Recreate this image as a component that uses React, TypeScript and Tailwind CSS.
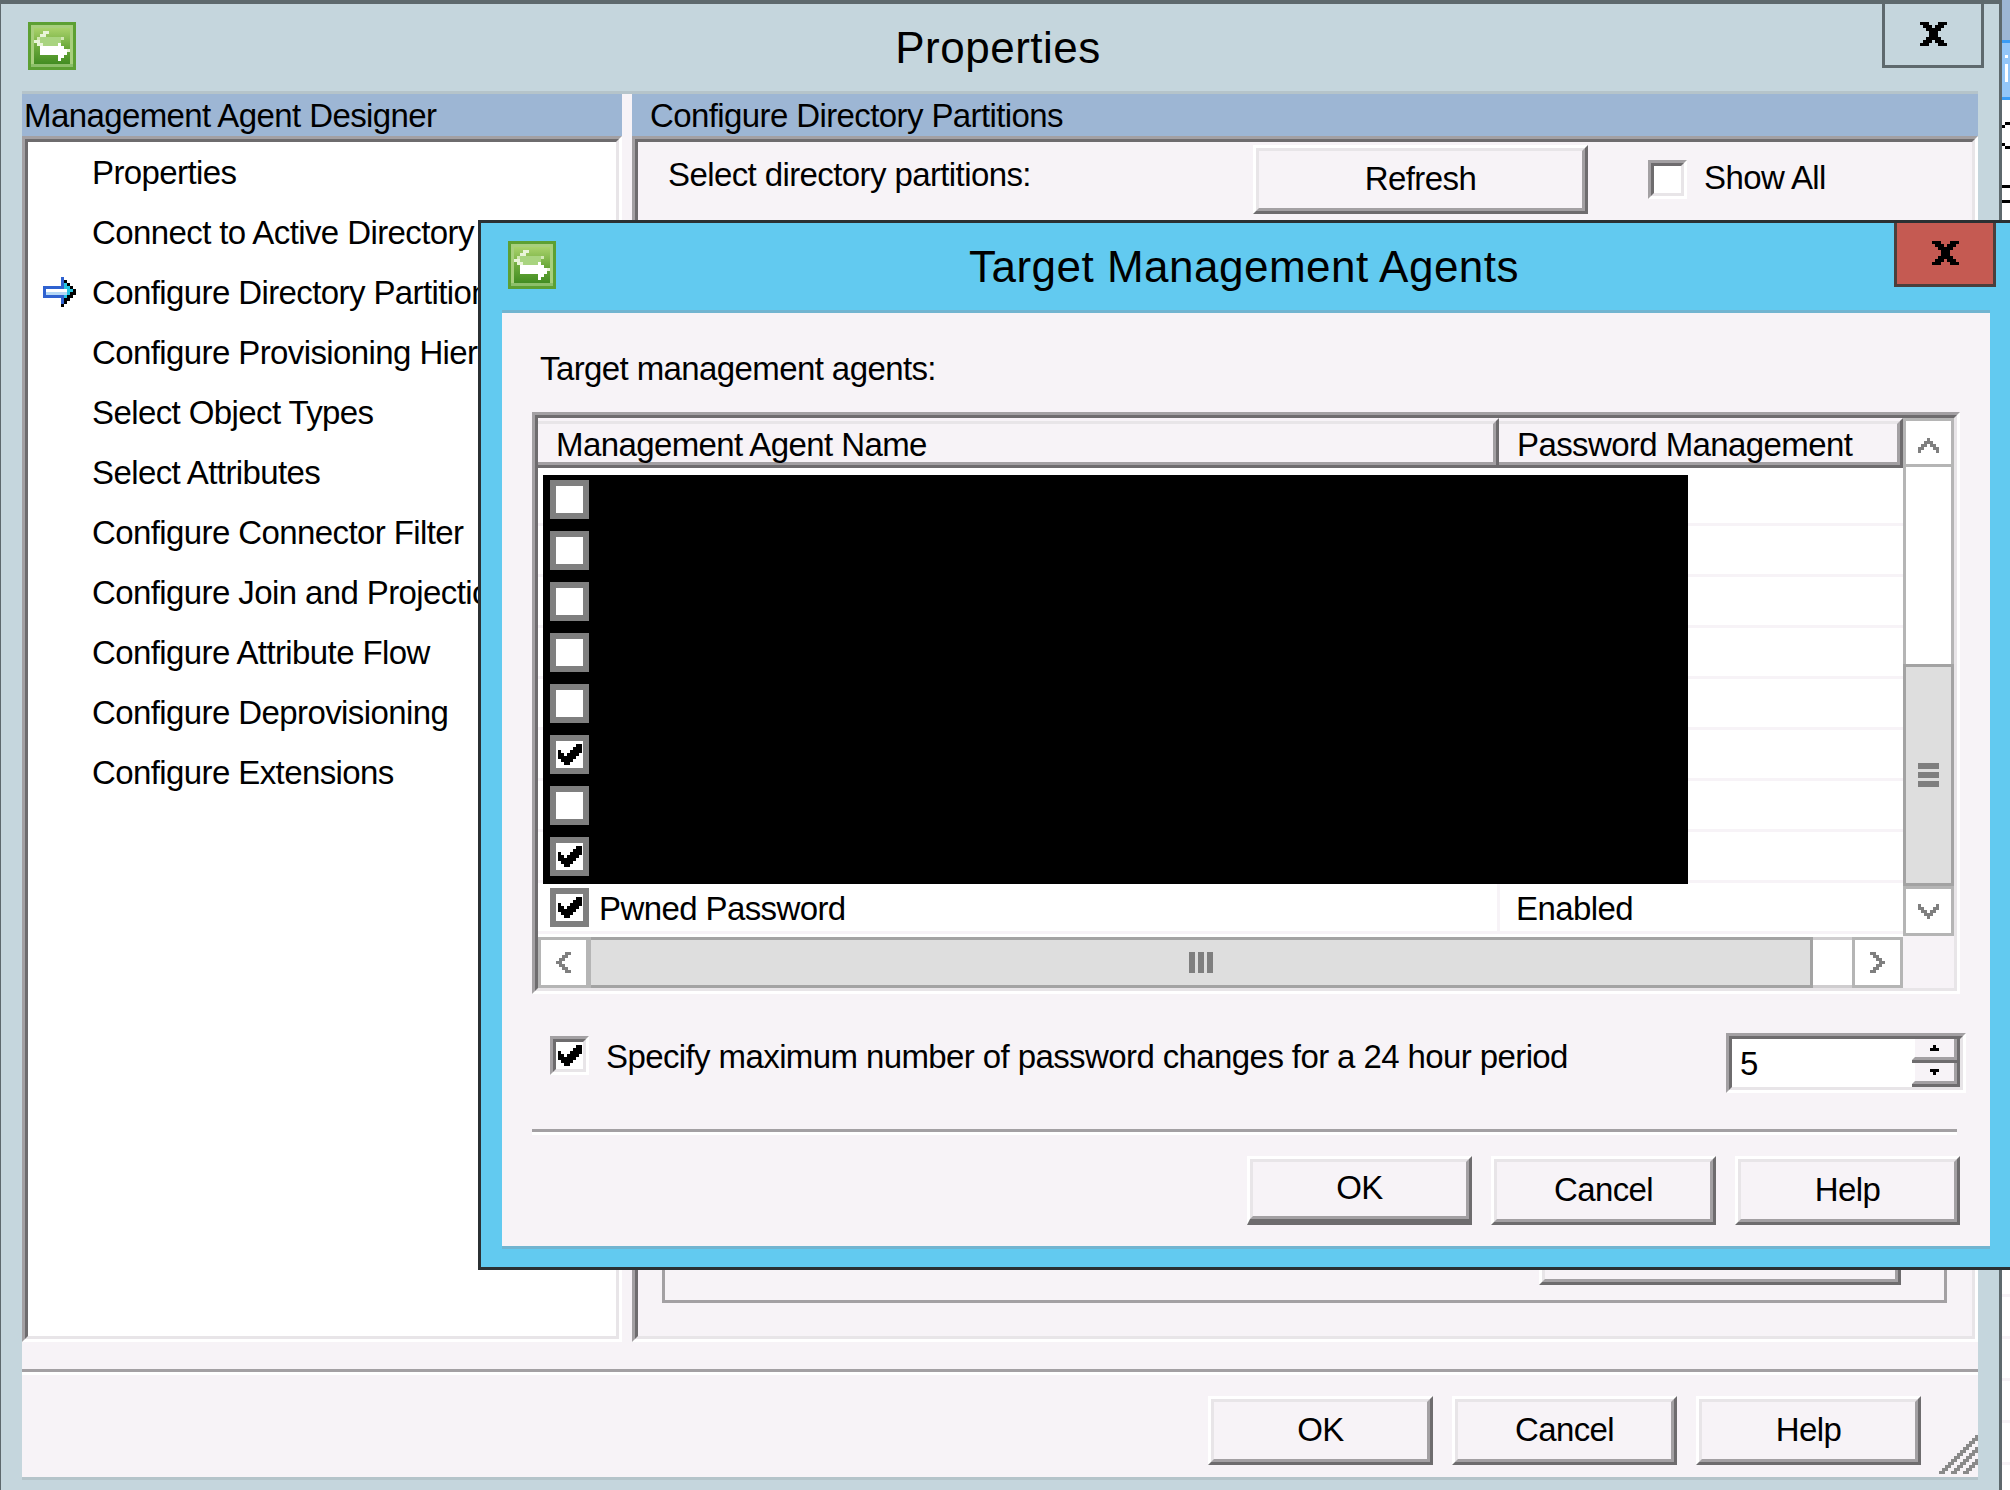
import type { ReactNode } from "react";

const NAV_ITEMS = [
  "Properties",
  "Connect to Active Directory Forest",
  "Configure Directory Partitions",
  "Configure Provisioning Hierarchy",
  "Select Object Types",
  "Select Attributes",
  "Configure Connector Filter",
  "Configure Join and Projection Rules",
  "Configure Attribute Flow",
  "Configure Deprovisioning",
  "Configure Extensions",
];

const AGENT_ROWS = [false, false, false, false, false, true, false, true];

// every picture in this old UI is a bitmap scaled 3x, so draw them from pixel rows
function Pixels({ rows, color, size = 3 }: { rows: string[]; color: string; size?: number }) {
  const w = rows[0].length;
  const h = rows.length;
  return (
    <svg width={w * size} height={h * size} viewBox={`0 0 ${w} ${h}`} shapeRendering="crispEdges" className="block shrink-0">
      {rows.map((row, y) =>
        row.split("").map((c, x) => (c === "1" ? <rect key={`${x}-${y}`} x={x} y={y} width={1} height={1} fill={color} /> : null))
      )}
    </svg>
  );
}

const CLOSE = ["111000111", "011101110", "001111100", "000111000", "000111000", "001111100", "011101110", "111000111"];
const CHECK = ["00000011", "00000111", "10001111", "11011110", "11111100", "01111000", "00110000"];
const CHEV_UP = ["0001000", "0011100", "0110110", "1100011", "1000001"];
const CHEV_DOWN = [...CHEV_UP].reverse();
const CHEV_LEFT = ["00011", "00110", "01100", "11000", "01100", "00110", "00011"];
const CHEV_RIGHT = ["11000", "01100", "00110", "00011", "00110", "01100", "11000"];
const GRIP = Array.from({ length: 13 }, (_, y) =>
  Array.from({ length: 13 }, (_, x) => ([12, 13, 16, 17, 20, 21].includes(x + y) ? "1" : "0")).join("")
);

function AppIcon() {
  return (
    <svg width={48} height={48} viewBox="0 0 16 16" shapeRendering="crispEdges" className="block shrink-0">
      <defs>
        <linearGradient id="grn" x1="0" y1="0" x2="0" y2="1">
          <stop offset="0" stopColor="#a9d26b" />
          <stop offset="0.55" stopColor="#6aa83a" />
          <stop offset="1" stopColor="#438d22" />
        </linearGradient>
      </defs>
      <rect x={0} y={0} width={16} height={16} fill="#5da033" />
      <rect x={1} y={1} width={14} height={14} fill="#a8cf7c" />
      <rect x={1} y={14} width={14} height={1} fill="#8dbf6a" />
      <rect x={2} y={2} width={12} height={12} fill="url(#grn)" />
      {/* back arrow */}
      <rect x={5} y={3} width={2} height={1} fill="#e9f4d8" />
      <rect x={4} y={4} width={2} height={1} fill="#e9f4d8" />
      <rect x={3} y={5} width={9} height={1} fill="#d3e8b5" />
      <rect x={2} y={6} width={2} height={1} fill="#e9f4d8" />
      <rect x={4} y={5} width={7} height={3} fill="#a9d480" />
      <rect x={3} y={7} width={2} height={1} fill="#e9f4d8" />
      {/* front arrow */}
      <rect x={4} y={8} width={7} height={3} fill="#ffffff" />
      <rect x={10} y={7} width={1} height={6} fill="#ffffff" />
      <rect x={11} y={8} width={1} height={4} fill="#ffffff" />
      <rect x={12} y={9} width={1} height={2} fill="#ffffff" />
      <rect x={13} y={9} width={1} height={1} fill="#e9f4d8" />
    </svg>
  );
}

function CurrentArrow() {
  return (
    <svg width={33} height={30} viewBox="0 0 11 10" shapeRendering="crispEdges" className="block">
      <path fill="#000" d="M0 7h6v3h1V9h1V8h1V7h1V6h1V4h-1V3H9V2H8V1H7v2H6v4H0z" />
      <path fill="#2f62d0" d="M0 3h6V0h1v2h1v1h1v1h1v1h-1v1H8v1H7v2H6V7H0z" />
      <path fill="#25c3e0" d="M7 2h1v1h1v1h1v1H9v1H8v1H7V6h1V4H7z" />
      <path fill="#ffffff" d="M1 4h7v1H1z" />
      <path fill="#b5d8f5" d="M1 5h7v1H1z" />
    </svg>
  );
}

function Sunken({ className = "", children }: { className?: string; children?: ReactNode }) {
  return (
    <div className={`border-[3px] border-t-[#a3a0a3] border-l-[#a3a0a3] border-r-white border-b-white ${className}`}>
      <div className="h-full w-full border-[3px] border-t-[#6e6c6e] border-l-[#6e6c6e] border-r-[#e8e5e8] border-b-[#e8e5e8]">
        {children}
      </div>
    </div>
  );
}

function Button({ label, primary = false, className = "" }: { label: string; primary?: boolean; className?: string }) {
  return (
    <div
      className={`h-[69px] w-[225px] shrink-0 border-[3px] border-t-white border-l-white border-r-[#6e6c6e] border-b-[#6e6c6e] ${
        primary ? "border-t-[#6e6c6e] border-l-[#6e6c6e] border-b-[6px]" : ""
      } ${className}`}
    >
      <div className="flex h-full w-full items-center justify-center border-[3px] border-t-[#e8e5e8] border-l-[#e8e5e8] border-r-[#a3a0a3] border-b-[#a3a0a3] bg-[#f7f3f7] pb-[3px] text-[33px] leading-none">
        {label}
      </div>
    </div>
  );
}

function SunkenCheck({ checked = false }: { checked?: boolean }) {
  return (
    <Sunken className="h-[39px] w-[39px] shrink-0">
      <div className="flex h-full w-full items-center justify-center bg-white">
        {checked && <Pixels rows={CHECK} color="#000" />}
      </div>
    </Sunken>
  );
}

function ListCheck({ checked = false }: { checked?: boolean }) {
  return (
    <div className="relative flex h-[39px] w-[39px] shrink-0 items-center justify-center border-[6px] border-[#7f7f7f] bg-white">
      {checked && <Pixels rows={CHECK} color="#000" />}
    </div>
  );
}

function TitleBar({ title, closeClass }: { title: string; closeClass: string }) {
  return (
    <div className="flex h-[87px] shrink-0 items-start pl-[27px]">
      <div className="pt-[18px]">
        <AppIcon />
      </div>
      <div className="flex h-[87px] flex-1 items-center justify-center pl-[38px] text-[44px] leading-none tracking-[0.5px]">{title}</div>
      <div className={`flex h-[64px] w-[102px] shrink-0 items-center justify-center border-x-[3px] border-b-[3px] pb-[1px] pl-[1px] ${closeClass}`}>
        <Pixels rows={CLOSE} color="#000" />
      </div>
    </div>
  );
}

function ScrollButton({ rows, className = "" }: { rows: string[]; className?: string }) {
  return (
    <div className={`flex items-center justify-center border-[3px] border-[#b5b5b5] bg-white ${className}`}>
      <Pixels rows={rows} color="#7f7f7f" />
    </div>
  );
}

function HeaderCell({ label, className = "" }: { label: string; className?: string }) {
  return (
    <div className={`border-b-[3px] border-r-[3px] border-t-[3px] border-b-[#6e6c6e] border-r-[#6e6c6e] border-t-[#f7f3f7] ${className}`}>
      <div className="flex h-full items-center border-b-[3px] border-r-[3px] border-t-[3px] border-b-[#a3a0a3] border-r-[#a3a0a3] border-t-[#e8e5e8] pl-[18px] pt-[2px] text-[33px] leading-none">
        {label}
      </div>
    </div>
  );
}

function SpinButton({ rows }: { rows: string[] }) {
  return (
    <div className="flex-1 border-b-[3px] border-r-[3px] border-[#6e6c6e]">
      <div className="flex h-full items-center justify-center border-b-[3px] border-l-[3px] border-r-[3px] border-b-[#a3a0a3] border-l-white border-r-[#a3a0a3] bg-[#f7f3f7]">
        <Pixels rows={rows} color="#000" />
      </div>
    </div>
  );
}

function AgentsDialog() {
  return (
    <div className="absolute left-[478px] top-[220px] flex h-[1050px] w-[1532px] flex-col border-y-[3px] border-l-[3px] border-[#2b3033] bg-[#62caf0]">
      <TitleBar title="Target Management Agents" closeClass="mr-[14px] border-[#4b3e3c] bg-[#c55a52]" />
      <div className="ml-[21px] h-[939px] w-[1488px] border-y-[3px] border-[#72b4d0] bg-[#f7f3f7] px-[30px]">
        <div className="mb-[24px] mt-[35px] flex h-[40px] items-center pl-[8px] text-[33px] leading-none">
          Target management agents:
        </div>

        <Sunken className="h-[582px] w-[1428px]">
          <div className="flex h-full w-full bg-[#f7f3f7]">
            <div className="flex w-[1365px] flex-col">
              <div className="flex h-[50px] shrink-0">
                <HeaderCell label="Management Agent Name" className="w-[961px]" />
                <HeaderCell label="Password Management" className="flex-1 border-r-0" />
              </div>
              <div className="relative h-[469px] shrink-0 bg-white pt-[7px]">
                {/* redacted block over the agent names */}
                <div className="absolute left-[5px] top-[7px] h-[409px] w-[1145px] bg-black" />
                {AGENT_ROWS.map((checked, i) => (
                  <div key={i} className="flex h-[51px] items-center border-b-[3px] border-[#f7f3f7] pl-[12px]">
                    <ListCheck checked={checked} />
                  </div>
                ))}
                <div className="flex h-[51px] items-center border-b-[3px] border-[#f7f3f7] pl-[12px] text-[33px] leading-none">
                  <ListCheck checked />
                  <div className="w-[908px] pl-[10px] pt-[2px]">Pwned Password</div>
                  <div className="h-full w-[3px] bg-[#f7f3f7]" />
                  <div className="pl-[16px] pt-[2px]">Enabled</div>
                </div>
              </div>
              {/* horizontal scrollbar */}
              <div className="flex h-[51px] shrink-0">
                <ScrollButton rows={CHEV_LEFT} className="w-[53px] border-r-[5px]" />
                <div className="flex w-[1222px] items-center justify-center gap-[3px] border-y-[3px] border-r-[3px] border-[#a3a3a3] bg-[#dedede]">
                  <div className="h-[21px] w-[6px] bg-[#7f7f7f]" />
                  <div className="h-[21px] w-[6px] bg-[#7f7f7f]" />
                  <div className="h-[21px] w-[6px] bg-[#7f7f7f]" />
                </div>
                <div className="w-[39px] border-y-[3px] border-[#cfcdcf] bg-white" />
                <ScrollButton rows={CHEV_RIGHT} className="w-[51px]" />
              </div>
            </div>
            {/* vertical scrollbar */}
            <div className="flex w-[51px] flex-col">
              <ScrollButton rows={CHEV_UP} className="h-[49px] pt-[6px]" />
              <div className="h-[197px] border-x-[3px] border-[#b5b5b5] bg-white" />
              <div className="flex h-[222px] flex-col items-center justify-center gap-[3px] border-[3px] border-[#a3a3a3] bg-[#dedede]">
                <div className="h-[6px] w-[21px] bg-[#7f7f7f]" />
                <div className="h-[6px] w-[21px] bg-[#7f7f7f]" />
                <div className="h-[6px] w-[21px] bg-[#7f7f7f]" />
              </div>
              <ScrollButton rows={CHEV_DOWN} className="h-[50px]" />
            </div>
          </div>
        </Sunken>

        <div className="mr-[-6px] mt-[39px] flex h-[60px] items-start pl-[18px]">
          <div className="mt-[3px]">
            <SunkenCheck checked />
          </div>
          <div className="ml-[17px] mt-[5px] flex h-[36px] items-center text-[33px] leading-none">
            Specify maximum number of password changes for a 24 hour period
          </div>
          <div className="ml-auto flex h-[60px] w-[240px]">
            <Sunken className="h-full w-full">
              <div className="flex h-full w-full items-center bg-white">
                <div className="flex-1 pl-[8px] text-[33px] leading-none">5</div>
                <div className="flex h-full w-[48px] flex-col">
                  <SpinButton rows={["010", "111"]} />
                  <SpinButton rows={["111", "010"]} />
                </div>
              </div>
            </Sunken>
          </div>
        </div>

        <div className="mr-[3px] mt-[36px] h-[6px] border-b-[3px] border-t-[3px] border-b-white border-t-[#a3a0a3]" />

        <div className="mt-[21px] flex justify-end gap-[19px]">
          <Button label="OK" primary />
          <Button label="Cancel" />
          <Button label="Help" />
        </div>
      </div>
    </div>
  );
}

function DesignerWindow() {
  return (
    <div className="flex h-full w-[2002px] shrink-0 flex-col border-l border-r-[3px] border-t-[4px] border-[#5e696d] bg-[#c5d6dd]">
      <TitleBar title="Properties" closeClass="mr-[15px] border-[#5e696d]" />

      <div className="mx-[21px] flex h-[1389px] flex-col border-y-[3px] border-[#b5c4ca] bg-[#f7f3f7]">
        <div className="flex h-[1248px] shrink-0">
          <div className="flex w-[600px] flex-col">
            <div className="flex h-[42px] shrink-0 items-center bg-[#9db6d4] pl-[2px] text-[33px] leading-none">
              Management Agent Designer
            </div>
            <Sunken className="flex-1">
              <div className="h-full w-full bg-white">
                {NAV_ITEMS.map((item, i) => (
                  <div key={item} className="flex h-[60px] items-center whitespace-nowrap text-[33px] leading-none">
                    <div className="w-[64px] shrink-0 pl-[15px]">{i === 2 && <CurrentArrow />}</div>
                    {item}
                  </div>
                ))}
              </div>
            </Sunken>
          </div>

          <div className="ml-[10px] flex flex-1 flex-col">
            <div className="flex h-[42px] shrink-0 items-center bg-[#9db6d4] pl-[18px] text-[33px] leading-none">
              Configure Directory Partitions
            </div>
            <Sunken className="flex-1">
              <div className="flex h-full flex-col">
                <div className="mt-[3px] flex h-[69px] shrink-0 items-start pl-[30px]">
                  <div className="flex h-[58px] w-[585px] items-center text-[33px] leading-none">Select directory partitions:</div>
                  <Button label="Refresh" className="w-[335px]" />
                  <div className="ml-[60px] mt-[15px]">
                    <SunkenCheck />
                  </div>
                  <div className="ml-[17px] flex h-[64px] items-center text-[33px] leading-none">Show All</div>
                </div>
                {/* group box, almost all of it sits under the dialog */}
                <div className="mb-[33px] ml-[24px] mr-[25px] mt-[20px] flex flex-1 flex-col justify-end border-[3px] border-[#a3a0a3] pb-[15px] pr-[43px]">
                  <Button label="" className="ml-auto w-[362px]" />
                </div>
              </div>
            </Sunken>
          </div>
        </div>

        <div className="mt-[27px] h-[6px] shrink-0 border-b-[3px] border-t-[3px] border-b-white border-t-[#a3a0a3]" />

        <div className="relative flex flex-1 justify-end gap-[19px] pr-[57px] pt-[21px]">
          <Button label="OK" />
          <Button label="Cancel" />
          <Button label="Help" />
          <div className="absolute bottom-[3px] right-0">
            <Pixels rows={GRIP} color="#8a8a8a" />
          </div>
        </div>
      </div>
    </div>
  );
}

// the edge of the window behind, only 8px of it shows
function BehindEdge() {
  return (
    <div className="flex h-full flex-1 flex-col bg-white">
      <div className="h-[40px] bg-[#9db6d4]" />
      <div className="h-[60px] border-y-[3px] border-[#3a9cf5] bg-[#93c6f8] pl-[3px] pt-[12px]">
        <div className="h-[3px] w-[3px] bg-white" />
        <div className="mt-[6px] h-[18px] w-[3px] bg-white" />
      </div>
      <div className="ml-[3px] mt-[22px] h-[3px] bg-black" />
      <div className="h-[3px] w-[3px] bg-black" />
      <div className="mt-[15px] h-[3px] w-[3px] bg-black" />
      <div className="ml-[3px] h-[3px] bg-black" />
      <div className="mt-[36px] h-[3px] bg-black" />
      <div className="mt-[12px] h-[3px] bg-black" />
      <div className="mt-[1091px] h-[3px] bg-[#f7f3f7]" />
      <div className="mt-[39px] h-[3px] bg-[#f7f3f7]" />
      <div className="mt-[39px] h-[3px] bg-[#f7f3f7]" />
      <div className="mt-[39px] h-[3px] bg-[#f7f3f7]" />
      <div className="mt-[39px] h-[3px] bg-[#f7f3f7]" />
    </div>
  );
}

export default function App() {
  return (
    <div className="relative flex h-[1490px] w-[2010px] overflow-hidden bg-white font-['Liberation_Sans',sans-serif] tracking-[-0.6px] text-black">
      <DesignerWindow />
      <BehindEdge />
      <AgentsDialog />
    </div>
  );
}
